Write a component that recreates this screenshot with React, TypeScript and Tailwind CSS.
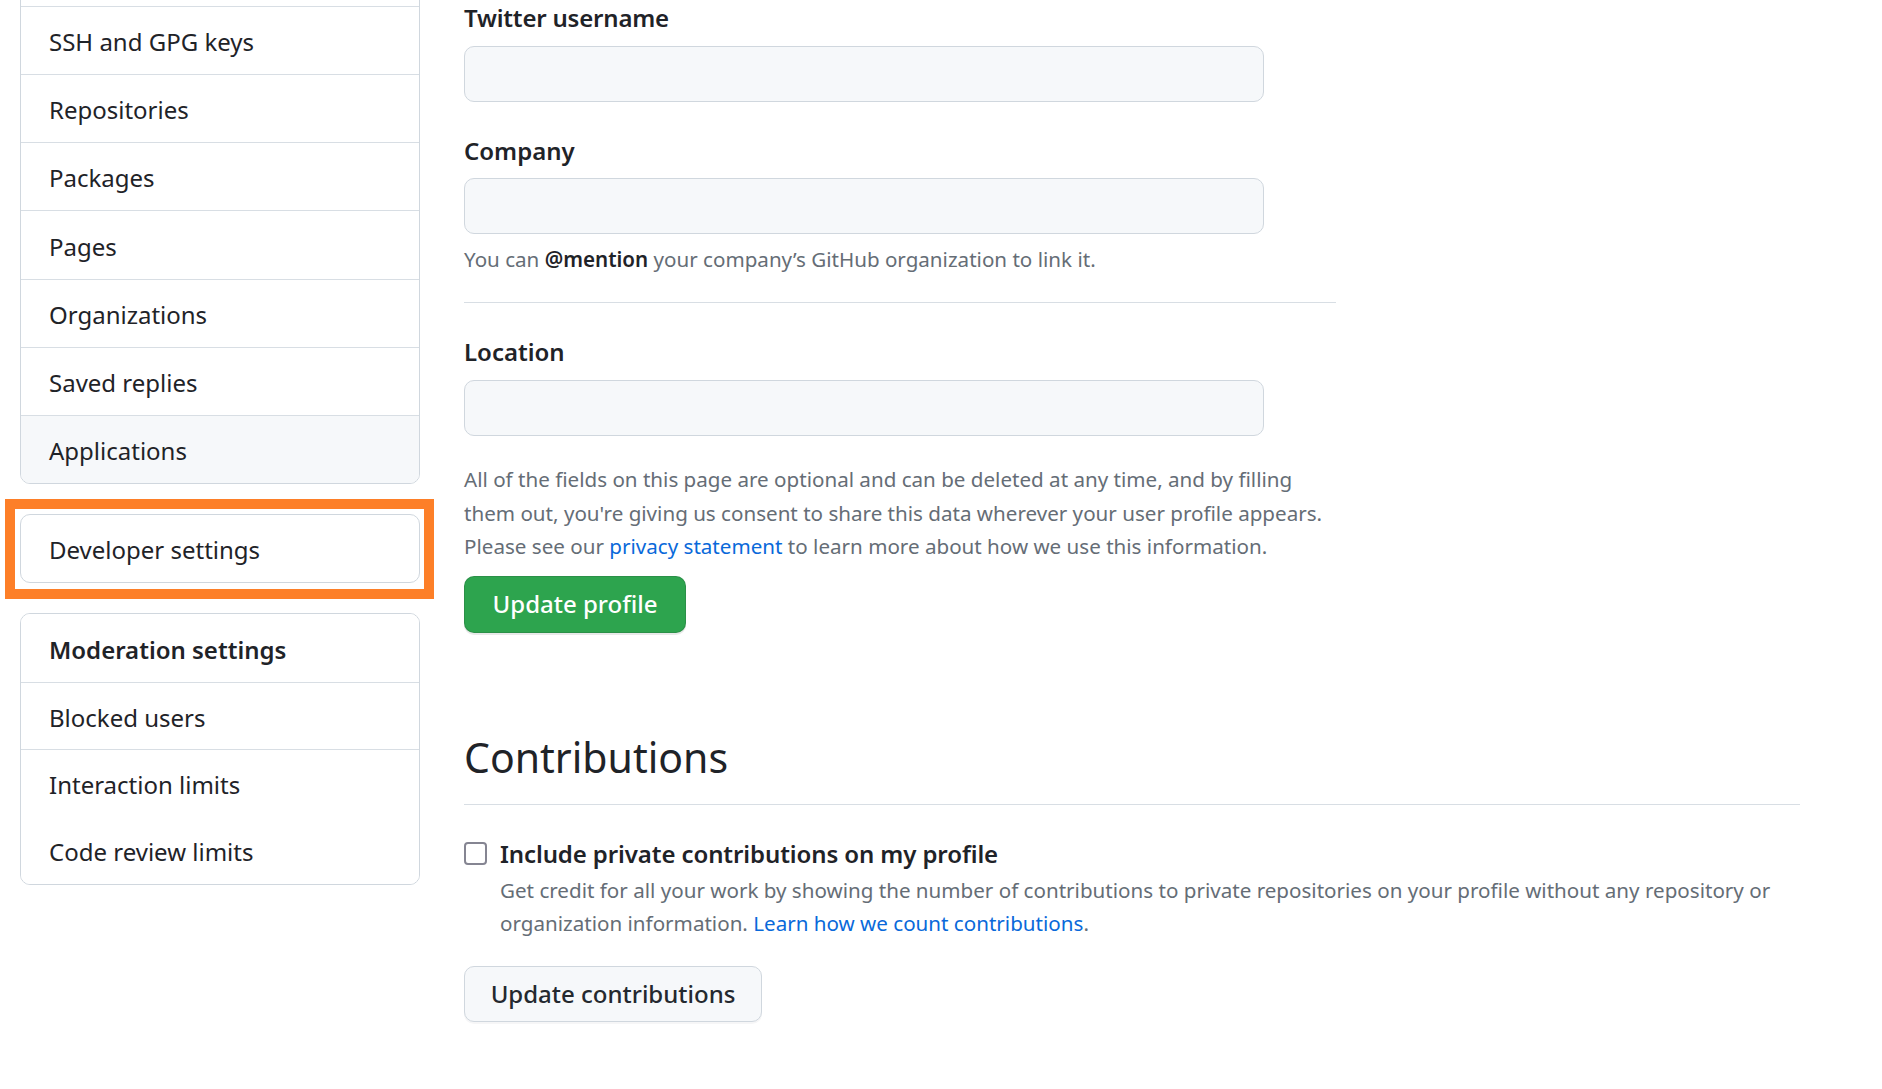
import React from "react";

function SideRow({
  label,
  top = true,
  h,
  bg = false,
  bold = false,
}: {
  label: string;
  top?: boolean;
  h: string;
  bg?: boolean;
  bold?: boolean;
}) {
  return (
    <div
      className={
        "flex items-center pl-[28px] pt-[3px] " +
        h +
        (top ? " border-t border-[#d8dee4]" : "") +
        (bg ? " bg-[#f6f8fa]" : " bg-white") +
        (bold ? " font-semibold" : "")
      }
    >
      {label}
    </div>
  );
}

export default function App() {
  return (
    <div className="min-h-[1089px] w-[1882px] overflow-hidden bg-white font-['Noto_Sans',sans-serif] text-[24px] text-[#1f2328] flex pl-[20px] gap-[44px]">
      {/* Sidebar */}
      <div className="w-[400px] shrink-0 flex flex-col">
        <div className="-mt-[63px] border border-[#d0d7de] rounded-b-[10px] overflow-hidden">
          <SideRow label="" top={false} h="h-[68px]" />
          <SideRow label="SSH and GPG keys" h="h-[68px]" />
          <SideRow label="Repositories" h="h-[68px]" />
          <SideRow label="Packages" h="h-[68px]" />
          <SideRow label="Pages" h="h-[69px]" />
          <SideRow label="Organizations" h="h-[68px]" />
          <SideRow label="Saved replies" h="h-[68px]" />
          <SideRow label="Applications" h="h-[68px]" bg />
        </div>

        <div className="mt-[15px] -ml-[15px] -mr-[14px] border-[10px] border-[#fd7f28] pl-[5px] pr-[4px] pt-[5px] pb-[6px]">
          <div className="h-[69px] flex items-center pl-[28px] pt-[3px] border border-[#d0d7de] rounded-[10px]">
            Developer settings
          </div>
        </div>

        <div className="mt-[14px] border border-[#d0d7de] rounded-[10px] overflow-hidden">
          <SideRow label="Moderation settings" top={false} h="h-[68px]" bold />
          <SideRow label="Blocked users" h="h-[67px]" />
          <SideRow label="Interaction limits" h="h-[68px]" />
          <SideRow label="Code review limits" top={false} h="h-[67px]" />
        </div>
      </div>

      {/* Main */}
      <div className="w-[1336px] shrink-0 flex flex-col">
        <div className="w-[872px] flex flex-col">
          <label className="block font-semibold leading-[35px] tracking-[-0.2px]">Twitter username</label>
          <div className="mt-[11px] h-[56px] w-[800px] rounded-[10px] border border-[#d0d7de] bg-[#f6f8fa]" />

          <label className="mt-[31px] block font-semibold leading-[35px]">Company</label>
          <div className="mt-[10px] h-[56px] w-[800px] rounded-[10px] border border-[#d0d7de] bg-[#f6f8fa]" />
          <p className="mt-[8px] leading-[35px] text-[20.6px] text-[#656d76]">
            You can <strong className="font-semibold text-[#1f2328]">@mention</strong> your company’s GitHub organization to link it.
          </p>

          <div className="mt-[25px] border-t border-[#d8dee4]" />

          <label className="mt-[31px] block font-semibold leading-[35px]">Location</label>
          <div className="mt-[11px] h-[56px] w-[800px] rounded-[10px] border border-[#d0d7de] bg-[#f6f8fa]" />

          <p className="mt-[27px] leading-[33.5px] text-[20.6px] text-[#656d76] whitespace-nowrap">
            All of the fields on this page are optional and can be deleted at any time, and by filling
            <br />
            them out, you're giving us consent to share this data wherever your user profile appears.
            <br />
            Please see our <a className="text-[#0969da]">privacy statement</a> to learn more about how we use this information.
          </p>

          <button className="mt-[12px] h-[57px] w-[222px] rounded-[10px] border border-[rgba(31,35,40,0.15)] bg-[#2da44e] text-white font-medium shadow-[0_2px_0_rgba(31,35,40,0.1)] flex items-center justify-center">
            Update profile
          </button>
        </div>

        <h2 className="mt-[98px] text-[41px] font-normal leading-[52px] pb-[21px] border-b border-[#d8dee4]">
          Contributions
        </h2>

        <div className="mt-[31px] flex gap-[13px]">
          <div className="mt-[6px] h-[23px] w-[23px] shrink-0 rounded-[4px] border-[2.5px] border-[#858592] bg-white" />
          <div className="flex flex-col">
            <span className="font-semibold leading-[35px] tracking-[-0.1px]">Include private contributions on my profile</span>
            <p className="mt-[3px] text-[20.6px] leading-[33px] text-[#656d76] whitespace-nowrap">
              Get credit for all your work by showing the number of contributions to private repositories on your profile without any repository or
              <br />
              organization information. <a className="text-[#0969da]">Learn how we count contributions</a>.
            </p>
          </div>
        </div>

        <button className="mt-[26px] h-[56px] w-[298px] rounded-[10px] border border-[#d0d7de] bg-[#f6f8fa] text-[#24292f] font-medium shadow-[0_2px_0_rgba(31,35,40,0.04)] flex items-center justify-center">
          Update contributions
        </button>
      </div>
    </div>
  );
}
